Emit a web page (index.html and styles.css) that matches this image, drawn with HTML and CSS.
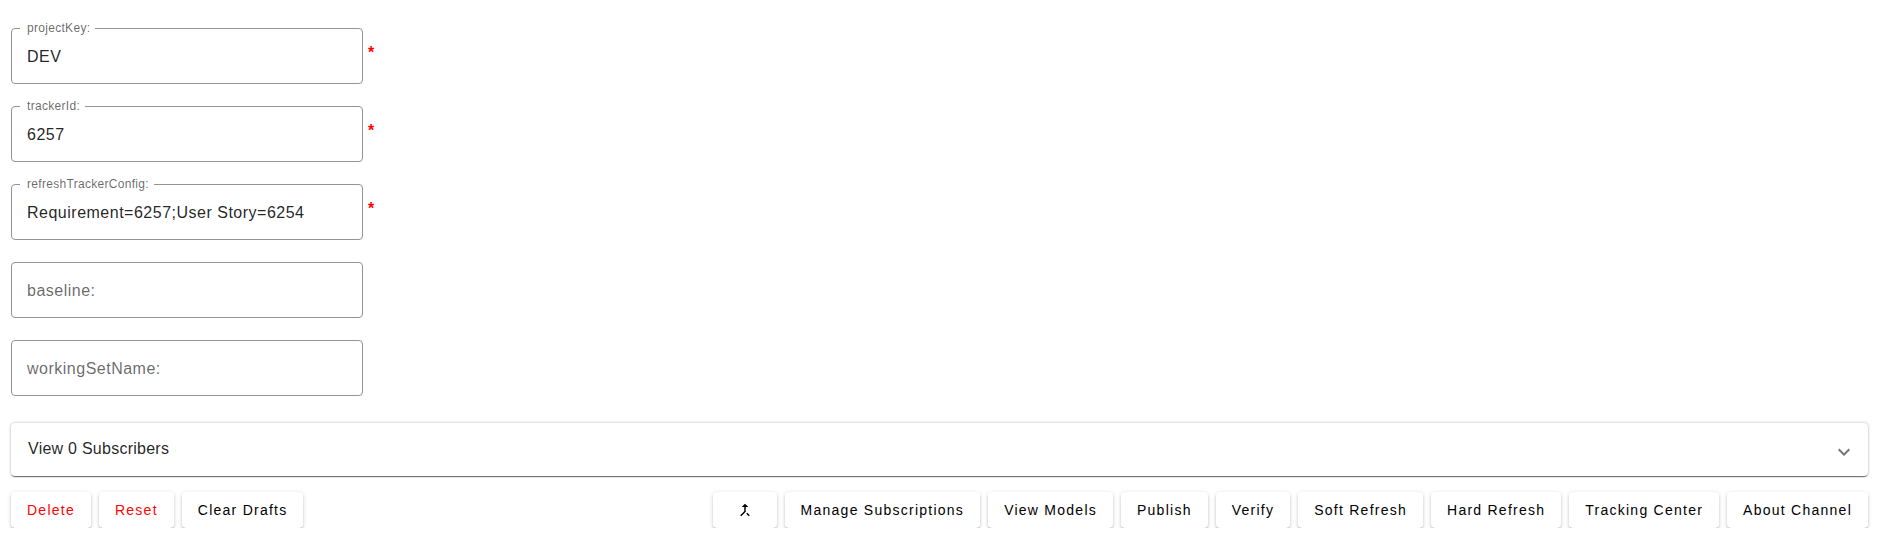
FILE: index.html
```html
<!DOCTYPE html>
<html lang="en">
<head>
  <meta charset="UTF-8" />
  <meta name="viewport" content="width=device-width, initial-scale=1.0"/>
  <title>Channel</title>
  <link rel="stylesheet" href="styles.css">
</head>
<body>
  <div class="fields">
    <div class="field-row">
      <div class="field">
        <fieldset class="outline"><legend>projectKey:</legend></fieldset>
        <input class="field-input" type="text" value="DEV">
      </div>
      <span class="required">*</span>
    </div>
    <div class="field-row">
      <div class="field">
        <fieldset class="outline"><legend>trackerId:</legend></fieldset>
        <input class="field-input" type="text" value="6257">
      </div>
      <span class="required">*</span>
    </div>
    <div class="field-row">
      <div class="field">
        <fieldset class="outline"><legend>refreshTrackerConfig:</legend></fieldset>
        <input class="field-input" type="text" value="Requirement=6257;User Story=6254">
      </div>
      <span class="required">*</span>
    </div>
    <div class="field-row">
      <div class="field">
        <fieldset class="outline plain"></fieldset>
        <input class="field-input" type="text" placeholder="baseline:">
      </div>
    </div>
    <div class="field-row">
      <div class="field">
        <fieldset class="outline plain"></fieldset>
        <input class="field-input" type="text" placeholder="workingSetName:">
      </div>
    </div>
  </div>

  <div class="accordion">
    <span class="accordion-title">View 0 Subscribers</span>
    <svg class="chevron" viewBox="0 0 24 24" width="24" height="24"><path d="M16.59 8.59 12 13.17 7.41 8.59 6 10l6 6 6-6z"/></svg>
  </div>

  <div class="actions">
    <div class="action-group">
      <button class="btn danger">Delete</button>
      <button class="btn danger">Reset</button>
      <button class="btn">Clear Drafts</button>
    </div>
    <div class="action-group">
      <button class="btn icon-btn" aria-label="Merge">
        <svg viewBox="0 0 24 24" width="18" height="18"><path d="M17 20.41 18.41 19 15 15.59 13.59 17 17 20.41zM7.5 8H11v5.59L5.59 19 7 20.41l6-6V8h3.5L12 3.5 7.5 8z"/></svg>
      </button>
      <button class="btn">Manage Subscriptions</button>
      <button class="btn">View Models</button>
      <button class="btn">Publish</button>
      <button class="btn">Verify</button>
      <button class="btn">Soft Refresh</button>
      <button class="btn">Hard Refresh</button>
      <button class="btn">Tracking Center</button>
      <button class="btn">About Channel</button>
    </div>
  </div>
</body>
</html>
```

FILE: styles.css
```css
body {
  font-family: "Liberation Sans", Arial, sans-serif;
  background: #fff;
  color: rgba(0,0,0,0.87);
  margin: 0;
  padding: 28px 14px 0 11px;
}

.fields {
  display: flex;
  flex-direction: column;
  gap: 22px;
}

.field-row {
  display: flex;
  align-items: flex-start;
}

.field {
  position: relative;
  width: 352px;
  height: 56px;
}

.outline {
  position: absolute;
  inset: -5px 0 0 0;
  margin: 0;
  padding: 0 8px;
  border: 1px solid #949494;
  border-radius: 4px;
  pointer-events: none;
}

.outline.plain {
  top: 0;
}

.outline legend {
  font-size: 12px;
  line-height: 11px;
  letter-spacing: 0.3px;
  padding: 0 5px 0 7px;
  color: rgba(0,0,0,0.6);
}

.field-input {
  box-sizing: border-box;
  width: 100%;
  height: 56px;
  padding: 2px 16px 0;
  border: none;
  background: transparent;
  outline: none;
  font-family: inherit;
  font-size: 16px;
  letter-spacing: 0.5px;
  color: rgba(0,0,0,0.87);
}

.field-input::placeholder {
  color: rgba(0,0,0,0.6);
  opacity: 1;
}

.required {
  color: #f00;
  font-size: 16px;
  font-weight: bold;
  line-height: 19px;
  margin: 15px 0 0 5px;
}

.accordion {
  display: flex;
  justify-content: space-between;
  align-items: center;
  height: 53px;
  margin-top: 27px;
  padding: 0 16px 0 17px;
  border-radius: 4px;
  font-size: 16px;
  letter-spacing: 0.25px;
  box-shadow: 0 2px 1px -1px rgba(0,0,0,0.4), 0 1px 1px 0 rgba(0,0,0,0.2), 0 0 3px 0 rgba(0,0,0,0.3);
}

.accordion-title {
  margin-bottom: 2px;
}

.chevron {
  fill: rgba(0,0,0,0.54);
  margin-top: 4px;
  margin-right: -4px;
}

.actions {
  display: flex;
  justify-content: space-between;
  margin-top: 16px;
}

.action-group {
  display: flex;
  gap: 8px;
}

.btn {
  height: 36px;
  padding: 0 16px;
  border: none;
  border-radius: 4px;
  background: #fff;
  color: #000;
  font-family: inherit;
  font-size: 14px;
  font-weight: 400;
  letter-spacing: 1.25px;
  cursor: pointer;
  box-shadow: 0 3px 1px -2px rgba(0,0,0,0.35), 0 2px 2px 0 rgba(0,0,0,0.16), 0 1px 4px 0 rgba(0,0,0,0.16);
}

.btn.danger {
  color: #f00;
}

.icon-btn {
  width: 64px;
  padding: 0;
}

.icon-btn svg {
  display: block;
  margin: 0 auto;
}
```
